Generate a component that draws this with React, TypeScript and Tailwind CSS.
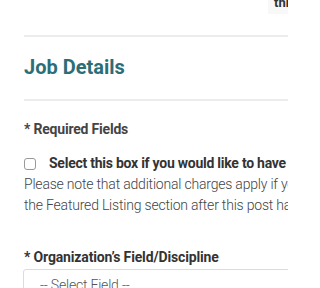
export default function App() {
  return (
    <div className="w-[288px] h-[288px] overflow-hidden bg-white font-['Roboto',sans-serif]">
      <div className="w-[520px]">
        {/* top strip */}
        <div className="h-[35px] pl-[268px]">
          <div className="relative -top-[4px] w-fit bg-[#f8f8f8] pl-[6px] pr-2 pb-[4px] text-[13px] leading-[14px] font-bold text-[#333] whitespace-nowrap">
            through the site
          </div>
        </div>
        <div className="ml-6 h-[2px] bg-[#ececec]" />

        <div className="pl-6">
          <h2 className="mt-[18px] text-[20px] leading-[24px] font-bold text-[#2c6e77]">Job Details</h2>
        </div>
        <div className="ml-6 mt-[20px] h-[2px] bg-[#ececec]" />

        <div className="pl-6 text-[#555]">
          <p className="mt-[20px] text-[14px] leading-[17px] font-bold text-[#444] tracking-[-0.2px]">* Required Fields</p>

          <label className="mt-[15px] flex items-center text-[14px] leading-[21px] font-bold text-[#333] whitespace-nowrap tracking-[-0.25px]">
            <span className="h-[12px] w-[12px] shrink-0 rounded-[3px] border border-[#999] bg-white" />
            <span className="ml-[13px]">Select this box if you would like to have this listing featured.</span>
          </label>
          <p className="text-[14px] leading-[21px] whitespace-nowrap tracking-[-0.2px] font-light text-[#444]">
            Please note that additional charges apply if you select this option. Details are in
            <br />
            the Featured Listing section after this post has been submitted.
          </p>

          <p className="mt-[32px] text-[14px] leading-[18px] font-bold text-[#333] tracking-[-0.15px]">* Organization&rsquo;s Field/Discipline</p>
          <div className="mt-[3px] -ml-px h-[40px] rounded-[3px] border border-[#dcdcdc] pl-4 pt-[5px] text-[14px] leading-[20px] font-light text-[#555] tracking-[-0.2px]">
            -- Select Field --
          </div>
        </div>
      </div>
    </div>
  );
}
